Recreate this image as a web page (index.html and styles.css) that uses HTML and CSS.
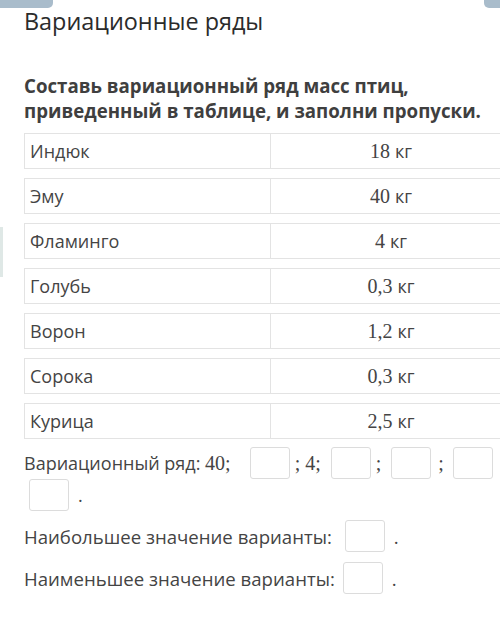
FILE: index.html
```html
<!DOCTYPE html>
<html lang="ru">
<head>
<meta charset="utf-8">
<link rel="stylesheet" href="styles.css">
</head>
<body>
<div class="tab tab-left"></div>
<div class="tab tab-right"></div>
<div class="side-mark"></div>
<main class="page">
  <h1 class="title">Вариационные ряды</h1>
  <p class="question">Составь вариационный ряд масс птиц, приведенный в таблице, и заполни пропуски.</p>
  <div class="table">
    <div class="row"><div class="cell name">Индюк</div><div class="cell val"><span class="num">18</span> кг</div></div>
    <div class="row"><div class="cell name">Эму</div><div class="cell val"><span class="num">40</span> кг</div></div>
    <div class="row"><div class="cell name">Фламинго</div><div class="cell val"><span class="num">4</span> кг</div></div>
    <div class="row"><div class="cell name">Голубь</div><div class="cell val"><span class="num">0,3</span> кг</div></div>
    <div class="row"><div class="cell name">Ворон</div><div class="cell val"><span class="num">1,2</span> кг</div></div>
    <div class="row"><div class="cell name">Сорока</div><div class="cell val"><span class="num">0,3</span> кг</div></div>
    <div class="row"><div class="cell name">Курица</div><div class="cell val"><span class="num">2,5</span> кг</div></div>
  </div>
  <div class="series">
    <div class="line">Вариационный ряд: <span class="num">40;</span><span class="box b1"></span><span class="num">; 4;</span><span class="box b2"></span><span class="num">;</span><span class="box b3"></span><span class="num">;</span><span class="box b4"></span></div>
    <div class="line second"><span class="box b0"></span><span class="dot">.</span></div>
  </div>
  <div class="line answer">Наибольшее значение варианты: <span class="box b5"></span><span class="dot">.</span></div>
  <div class="line answer">Наименьшее значение варианты:<span class="box b6"></span><span class="dot">.</span></div>
</main>
</body>
</html>
```
FILE: styles.css
```css
html, body {
  margin: 0;
  padding: 0;
  background: #ffffff;
  overflow: hidden;
}
body {
  width: 500px;
  height: 643px;
  position: relative;
  font-family: "Open Sans", "Noto Sans", sans-serif;
  color: #444;
}
.tab {
  position: absolute;
  top: 0;
  height: 8px;
  background: #a9bccb;
}
.tab-left { left: 0; width: 53px; border-radius: 0 0 5px 0; }
.tab-right { right: 0; width: 16px; border-radius: 0 0 0 5px; }
.side-mark {
  position: absolute;
  left: 0;
  top: 227px;
  width: 3px;
  height: 50px;
  background: #dfe8e6;
}
.page {
  padding: 6px 0 0 24px;
}
.title {
  margin: 0;
  font-weight: 400;
  font-size: 23.4px;
  line-height: 30px;
  color: #2b2b2b;
}
.question {
  margin: 37px 0 0;
  font-weight: 700;
  font-size: 18.7px;
  line-height: 25px;
  color: #3f3f3f;
  width: 476px;
}
.table {
  margin-top: 10px;
  width: 488px;
  display: flex;
  flex-direction: column;
  gap: 9px;
}
.row {
  display: flex;
  height: 36px;
  border: 1px solid #e3e3e3;
  box-sizing: border-box;
}
.cell {
  flex: 1;
  display: flex;
  align-items: center;
  font-size: 18px;
  color: #444;
}
.name {
  padding-left: 5px;
  border-right: 1px solid #e3e3e3;
}
.val {
  justify-content: center;
  gap: 5px;
}
.num {
  font-family: "Liberation Serif", "DejaVu Serif", serif;
  font-size: 20px;
}
.series {
  margin-top: 8px;
}
.line {
  display: flex;
  align-items: center;
  height: 32px;
  font-size: 18px;
  color: #444;
  white-space: pre;
}
.box {
  display: inline-block;
  width: 40px;
  height: 32px;
  border: 1px solid #dcdcdc;
  border-radius: 3px;
  box-sizing: border-box;
  background: #fff;
}
.b1 { margin: 0 5px 0 19px; }
.b2 { margin: 0 5px 0 10px; }
.b3 { margin: 0 7px 0 10px; }
.b4 { margin: 0 0 0 9px; }
.b0 { margin-left: 5px; }
.dot { margin-left: 9px; }
.answer {
  margin-top: 9px;
  font-size: 18.6px;
}
.answer + .answer {
  margin-top: 10px;
}
.b5 { margin-left: 8px; }
.b6 { margin-left: 8px; }
```
